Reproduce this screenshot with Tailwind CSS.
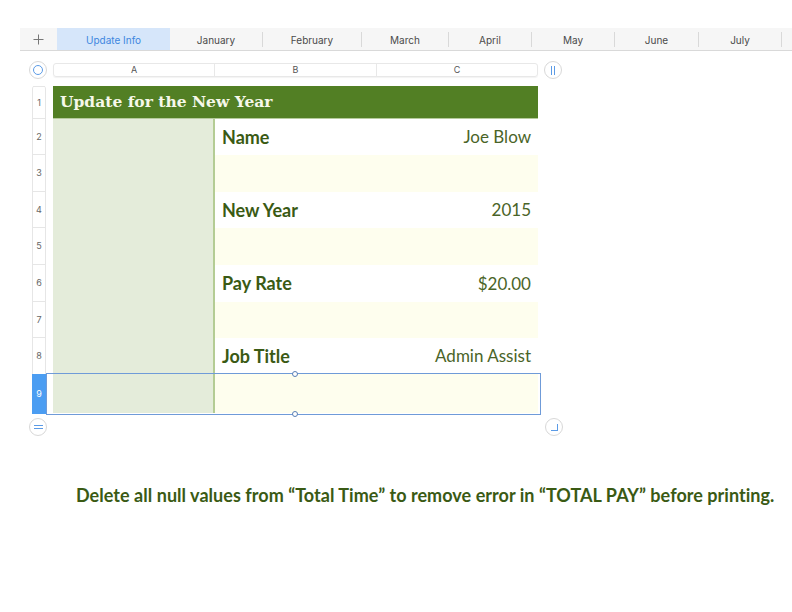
<!DOCTYPE html>
<html lang="en">
<head>
<meta charset="UTF-8">
<title>Update Info</title>
<script src="https://cdn.jsdelivr.net/npm/@tailwindcss/browser@4"></script>
</head>
<body class="bg-white">
<div class="w-[792px] h-[612px] overflow-hidden relative bg-white font-['Lato',sans-serif]">

  <!-- sheet tabs -->
  <div class="ml-5 mt-7 h-[23px] flex bg-[#f6f6f6] border-b border-[#d9d9d9] text-[10px] text-[#4a4a4a] font-['Inter',sans-serif]">
    <div class="w-[37px] flex items-center justify-center">
      <svg width="11" height="11" viewBox="0 0 11 11"><path d="M5.5 0.5v10M0.5 5.5h10" stroke="#777" stroke-width="1"/></svg>
    </div>
    <div class="w-[113px] flex items-center justify-center pt-[3px] bg-[#d6e6fa] text-[#3d87e0]">Update Info</div>
    <div class="w-[93px] flex items-center justify-center pt-[1px] my-[4px] h-[15px] leading-none border-r border-[#d9d9d9]">January</div>
    <div class="w-[99px] flex items-center justify-center pt-[1px] my-[4px] h-[15px] leading-none border-r border-[#d9d9d9]">February</div>
    <div class="w-[87px] flex items-center justify-center pt-[1px] my-[4px] h-[15px] leading-none border-r border-[#d9d9d9]">March</div>
    <div class="w-[83px] flex items-center justify-center pt-[1px] my-[4px] h-[15px] leading-none border-r border-[#d9d9d9]">April</div>
    <div class="w-[83px] flex items-center justify-center pt-[1px] my-[4px] h-[15px] leading-none border-r border-[#d9d9d9]">May</div>
    <div class="w-[84px] flex items-center justify-center pt-[1px] my-[4px] h-[15px] leading-none border-r border-[#d9d9d9]">June</div>
    <div class="w-[83px] flex items-center justify-center pt-[1px] my-[4px] h-[15px] leading-none border-r border-[#d9d9d9]">July</div>
  </div>

  <!-- column headers -->
  <div class="mt-[10px] ml-[29px] h-[18px] flex items-center">
    <div class="w-[18px] h-[18px] rounded-full border border-[#d8d8d8] flex items-center justify-center">
      <div class="w-[10px] h-[10px] rounded-full border border-[#5b9be6]"></div>
    </div>
    <div class="ml-[6px] w-[485px] h-[14px] flex rounded-[3px] border border-[#e8e8e8] shadow-[0_1px_1px_rgba(0,0,0,0.05)] text-[9px] text-[#555] font-['Inter',sans-serif]">
      <div class="w-[161px] border-r border-[#e8e8e8] flex items-center justify-center">A</div>
      <div class="w-[162px] border-r border-[#e8e8e8] flex items-center justify-center">B</div>
      <div class="flex-1 flex items-center justify-center">C</div>
    </div>
    <div class="ml-[6px] w-[18px] h-[18px] rounded-full border border-[#d8d8d8] flex items-center justify-center gap-[2px]">
      <div class="w-px h-[9px] bg-[#5b9be6]"></div>
      <div class="w-px h-[9px] bg-[#5b9be6]"></div>
    </div>
  </div>

  <!-- table -->
  <div class="mt-[7px] ml-8 flex">
    <div class="w-[14px] flex flex-col text-[9px] text-[#666] font-['Inter',sans-serif] border-l border-r border-[#e6e6e6] rounded-t-[3px]">
      <div class="h-[33px] border-t border-b border-[#e6e6e6] flex items-center justify-center">1</div>
      <div class="h-[36px] border-b border-[#e6e6e6] flex items-center justify-center">2</div>
      <div class="h-[37px] border-b border-[#e6e6e6] flex items-center justify-center">3</div>
      <div class="h-[36px] border-b border-[#e6e6e6] flex items-center justify-center">4</div>
      <div class="h-[37px] border-b border-[#e6e6e6] flex items-center justify-center">5</div>
      <div class="h-[37px] border-b border-[#e6e6e6] flex items-center justify-center">6</div>
      <div class="h-[36px] border-b border-[#e6e6e6] flex items-center justify-center">7</div>
      <div class="h-[36px] flex items-center justify-center">8</div>
      <div class="h-[40px] -mx-px bg-[#4b9df2] text-white flex items-center justify-center">9</div>
    </div>

    <div class="ml-[7px] w-[485px] flex flex-col">
      <div class="h-[33px] bg-[#527f24] border-b border-[#b5cb9b] flex items-center pl-[7px] text-[15.5px] font-bold text-[#f6f8ea] font-['DejaVu_Serif',serif]">Update for the New Year</div>
      <div class="flex">
        <div class="w-[162px] h-[294px] bg-[#e4ecda] border-r-2 border-[#b4cc94]"></div>
        <div class="flex-1 flex flex-col text-[#3a5a14]">
          <div class="h-[36px] flex items-center justify-between px-[7px]">
            <span class="text-[18px] font-bold">Name</span><span class="text-[17px] text-[#4a6428]">Joe Blow</span>
          </div>
          <div class="h-[37px] bg-[#fefeee]"></div>
          <div class="h-[36px] flex items-center justify-between px-[7px]">
            <span class="text-[18px] font-bold">New Year</span><span class="text-[17px] text-[#4a6428]">2015</span>
          </div>
          <div class="h-[37px] bg-[#fefeee]"></div>
          <div class="h-[37px] flex items-center justify-between px-[7px]">
            <span class="text-[18px] font-bold">Pay Rate</span><span class="text-[17px] text-[#4a6428]">$20.00</span>
          </div>
          <div class="h-[36px] bg-[#fefeee]"></div>
          <div class="h-[36px] flex items-center justify-between px-[7px]">
            <span class="text-[18px] font-bold">Job Title</span><span class="text-[17px] text-[#4a6428]">Admin Assist</span>
          </div>
          <div class="h-[39px] bg-[#fefeee]"></div>
        </div>
      </div>
    </div>
  </div>

  <!-- row / resize controls -->
  <div class="mt-[4px] ml-[29px] w-[534px] flex justify-between">
    <div class="w-[18px] h-[18px] rounded-full border border-[#d8d8d8] flex flex-col items-center justify-center gap-[2px]">
      <div class="w-[9px] h-px bg-[#5b9be6]"></div>
      <div class="w-[9px] h-px bg-[#5b9be6]"></div>
    </div>
    <div class="w-[18px] h-[18px] rounded-full border border-[#d8d8d8] flex items-center justify-center">
      <div class="w-[7px] h-[7px] border-r border-b border-[#5b9be6]"></div>
    </div>
  </div>

  <p class="mt-[46px] ml-[76px] whitespace-nowrap text-[18px] tracking-[0.04px] font-bold text-[#3a5a14]">Delete all null values from “Total Time” to remove error in “TOTAL PAY” before printing.</p>

  <!-- selected row outline -->
  <div class="absolute left-[46px] top-[373px] w-[495px] h-[42px] border border-[#6f9bd8]">
    <div class="absolute left-[245px] -top-[3px] w-[6px] h-[6px] rounded-full border border-[#5a7fb5] bg-white"></div>
    <div class="absolute left-[245px] -bottom-[3px] w-[6px] h-[6px] rounded-full border border-[#5a7fb5] bg-white"></div>
  </div>
</div>
</body>
</html>
